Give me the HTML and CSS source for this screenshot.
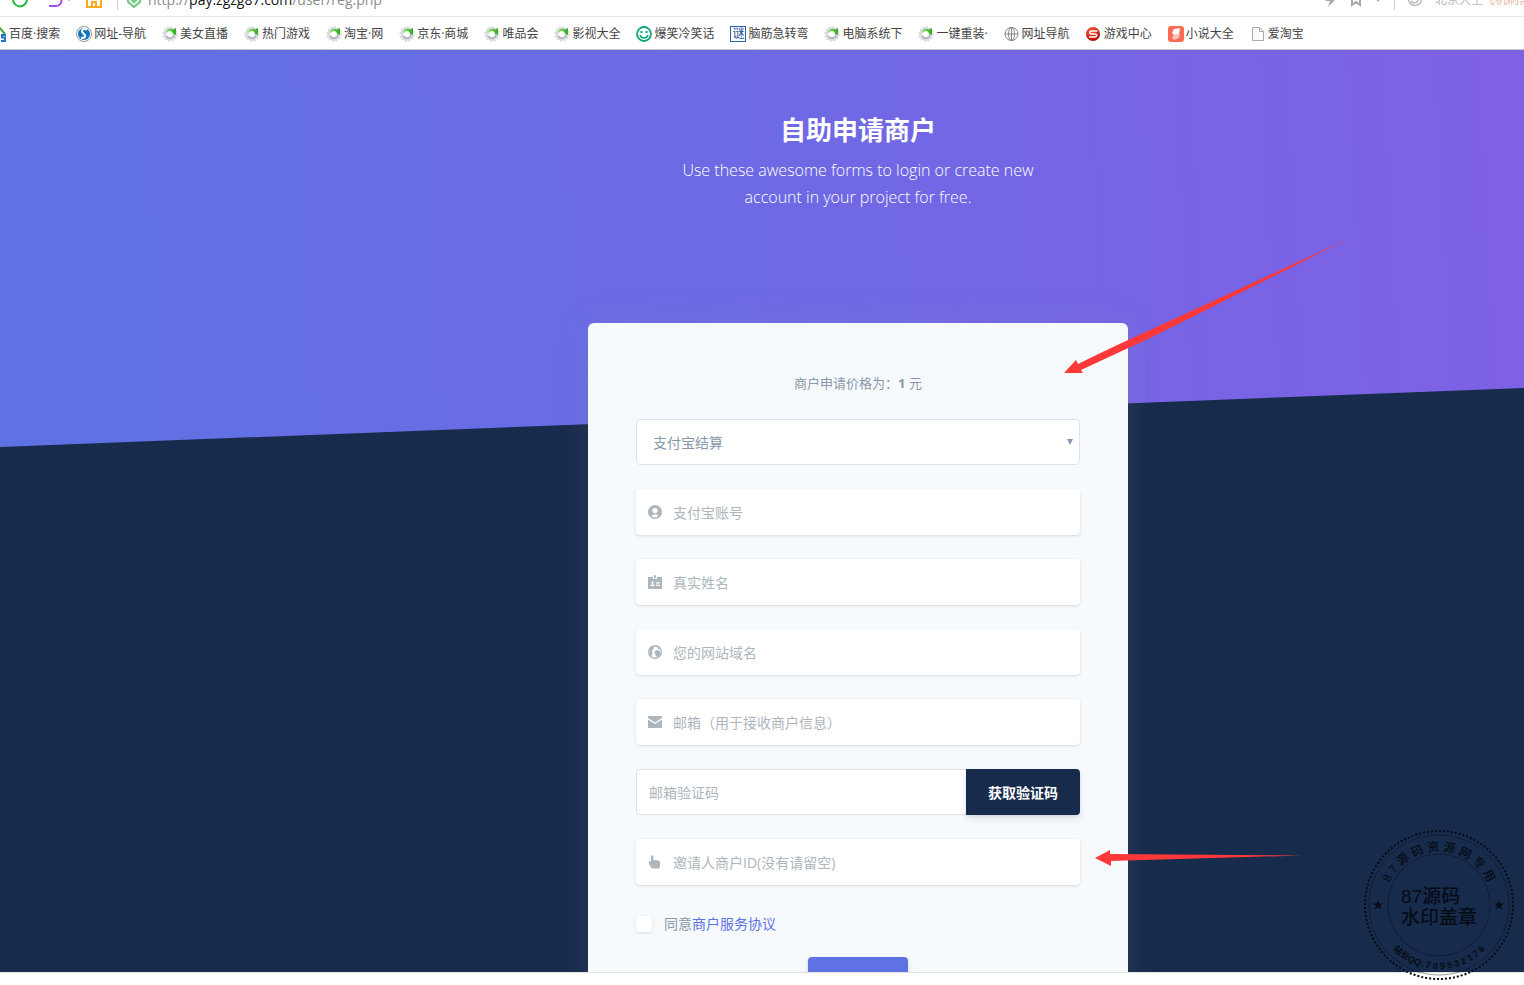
FILE: index.html
```html
<!doctype html>
<html lang="zh-CN">
<head>
  <meta charset="utf-8">
  <title>自助申请商户</title>
  <link rel="stylesheet" href="styles.css">
</head>
<body>
  <svg class="defs" aria-hidden="true">
    <defs>
      <linearGradient id="swirl-green" x1="0" y1="0" x2="1" y2="0">
        <stop offset="0" stop-color="#b9e8a4" />
        <stop offset=".5" stop-color="#5cc83c" />
        <stop offset="1" stop-color="#36a820" />
      </linearGradient>
      <radialGradient id="ball-red" cx=".4" cy=".3" r=".7">
        <stop offset="0" stop-color="#ff5a3c" />
        <stop offset="1" stop-color="#b00c04" />
      </radialGradient>
      <symbol id="gear" viewBox="0 0 16 16">
        <circle cx="8" cy="8" r="5.2" fill="none" stroke="#dcdce0" stroke-width="3" />
        <circle cx="8" cy="8" r="7" fill="none" stroke="#d6d6dc" stroke-width="1.4" stroke-dasharray="2 1.67" />
        <path d="M12.200 9a4.400 4.400 0 0 1-8 1" fill="none" stroke="#b4b4c0" stroke-width="1.600" />
        <path d="M3 7C4 3.200 7.600 1.600 11 3.400L14 2v6.500h-3C11 5 7.500 4 5.500 6.500z" fill="url(#swirl-green)" />
      </symbol>
    </defs>
  </svg>

  <header class="browser">
    <div class="toolbar">
      <svg class="tool reload" width="16" height="16" viewBox="0 0 16 16"><path d="M12.500 2A7 7 0 1 0 15 8" fill="none" stroke="#1fb63a" stroke-width="2" /></svg>
      <svg class="tool undo" width="22" height="16" viewBox="0 0 22 16"><path d="M3 3h5a5.500 5.500 0 0 1 0 11H1" fill="none" stroke="#a64bf4" stroke-width="2" /><circle cx="21" cy="8" r="1" fill="#c9a0f0" /></svg>
      <svg class="tool home" width="16" height="16" viewBox="0 0 16 16"><path d="M1 4v11h14V4M6 15v-5h4v5" fill="none" stroke="#fba81c" stroke-width="2" /></svg>
      <span class="divider"></span>
      <svg class="tool shield" width="16" height="16" viewBox="0 0 16 16"><path d="M2 2h12v8l-6 5-6-5z" fill="#e3f7e6" stroke="#6fcb80" stroke-width="2" /><path d="M5 7l3 3 4-4" fill="none" stroke="#6fcb80" stroke-width="2" /></svg>
      <span class="url">http://<b>pay.zgzg87.com</b>/user/reg.php</span>
      <div class="tools-right">
        <svg width="14" height="16" viewBox="0 0 14 16"><path d="M7 1L1 9h5l-2 6 9-9H8z" fill="#aaa" /></svg>
        <svg width="12" height="16" viewBox="0 0 12 16"><path d="M2 1h8v12L6 10l-4 3z" fill="none" stroke="#aaa" stroke-width="2" /></svg>
        <svg width="8" height="16" viewBox="0 0 8 16"><path d="M1 6h6l-3 4z" fill="#aaa" /></svg>
        <span class="divider"></span>
        <svg width="16" height="16" viewBox="0 0 16 16"><circle cx="8" cy="7" r="6.500" fill="none" stroke="#bbb" stroke-width="1.500" /><path d="M4 9c2 3 7 2 7-1s-5-3-6 0" fill="none" stroke="#bbb" stroke-width="1.500" /></svg>
        <span class="search">北京大空<i>飞机刷票</i></span>
      </div>
    </div>
    <nav class="bookmarks">
      <a href="#"><svg viewBox="0 0 16 16"><path d="M1 7l7-6 6 7" fill="none" stroke="#3fa535" stroke-width="2" /><path d="M4 7v8h5" fill="none" stroke="#3fa535" stroke-width="2" /><path d="M15 9h-4v2.500h3V15h-4" fill="none" stroke="#2272c8" stroke-width="2" /></svg>百度·搜索</a>
      <a href="#"><svg viewBox="0 0 16 16"><circle cx="8" cy="8" r="7.500" fill="#fff" stroke="#8f979e" /><circle cx="8" cy="8" r="6" fill="#1474bd" /><path d="M11 3.500C6 2 4.500 5 7.500 7.500s2 4.500-2.500 4.500" fill="none" stroke="#fff" stroke-width="2" /></svg>网址-导航</a>
      <a href="#"><svg><use href="#gear" /></svg>美女直播</a>
      <a href="#"><svg><use href="#gear" /></svg>热门游戏</a>
      <a href="#"><svg><use href="#gear" /></svg>淘宝·网</a>
      <a href="#"><svg><use href="#gear" /></svg>京东·商城</a>
      <a href="#"><svg><use href="#gear" /></svg>唯品会</a>
      <a href="#"><svg><use href="#gear" /></svg>影视大全</a>
      <a href="#"><svg viewBox="0 0 16 16"><circle cx="8" cy="8" r="7" fill="none" stroke="#12a57f" stroke-width="1.800" /><circle cx="5.500" cy="6" r="1.200" fill="#12a57f" /><circle cx="10.500" cy="6" r="1.200" fill="#12a57f" /><path d="M4 9c1 4 7 4 8 0" fill="none" stroke="#12a57f" stroke-width="1.500" /></svg>爆笑冷笑话</a>
      <a href="#"><span class="riddle">谜</span>脑筋急转弯</a>
      <a href="#"><svg><use href="#gear" /></svg>电脑系统下</a>
      <a href="#"><svg><use href="#gear" /></svg>一键重装·</a>
      <a href="#"><svg viewBox="0 0 16 16" fill="none" stroke="#858585"><circle cx="7.500" cy="8" r="6.500" /><ellipse cx="7.500" cy="8" rx="3" ry="6.500" /><path d="M1 8h13M7.500 1.500v13" /></svg>网址导航</a>
      <a href="#"><svg viewBox="0 0 16 16"><circle cx="7" cy="8" r="7" fill="url(#ball-red)" /><path d="M11.500 5H6C3 5 3 8 6 8h3c3 0 2 3-.5 3H3" fill="none" stroke="#fff" stroke-width="1.500" /></svg>游戏中心</a>
      <a href="#"><svg viewBox="0 0 16 16"><rect width="16" height="16" rx="3" fill="#ff6a55" /><path d="M6 3l6-1-1 6-5 1-2-2z" fill="#fff" /><path d="M6 9l6-1-1 4-5 2-2-2z" fill="#fff" opacity=".6" /></svg>小说大全</a>
      <a href="#"><svg viewBox="0 0 16 16"><path d="M2.500 1.500h7l4 4v9h-11zM9.500 1.500v4h4" fill="#fafafa" stroke="#a8a8a8" /></svg>爱淘宝</a>
    </nav>
  </header>

  <main>
    <section class="hero">
      <h1>自助申请商户</h1>
      <p>Use these awesome forms to login or create new account in your project for free.</p>
    </section>

    <section class="card">
      <form>
        <p class="price">商户申请价格为<span class="colon">：</span><b>1</b> 元</p>

        <div class="field select">
          <select aria-label="结算方式">
            <option>支付宝结算</option>
          </select>
          <svg class="caret" width="6" height="6" viewBox="0 0 6 6"><path d="M0 0h6L3 6z" fill="#8898aa" /></svg>
        </div>

        <label class="field">
          <svg viewBox="0 0 14 14"><path fill-rule="evenodd" d="M7 0a7 7 0 1 1 0 14A7 7 0 0 1 7 0zm0 3a2.600 2.600 0 1 0 0 5.200A2.600 2.600 0 0 0 7 3zM3.500 10.500C5 13 9 13 10.500 10.500 9 9 5 9 3.500 10.500z" /></svg>
          <input type="text" placeholder="支付宝账号">
        </label>

        <label class="field">
          <svg viewBox="0 0 14 14"><path fill-rule="evenodd" d="M0 2h5v2h4V2h5v12H0zM3.500 6.500v2.300h2V6.500zM2.500 11h4V9.600h-4zM8 7.200v1.300h4V7.200zM8 9.700V11h4V9.700z" /><rect x="6" width="2" height="3.500" rx="1" /></svg>
          <input type="text" placeholder="真实姓名">
        </label>

        <label class="field">
          <svg viewBox="0 0 14 14"><circle cx="7" cy="7" r="6.300" fill="none" stroke="#adb5bd" stroke-width="1.400" /><path d="M1 4l3-3 2 .5L5.500 4 4 5.500l.5 2L4 11 2 10zM7 6l2-1 2 .5L12.500 8 11 11l-2.500 1L7.500 10 6.500 8zM9 1l2 1 1.500 2H10z" /></svg>
          <input type="text" placeholder="您的网站域名">
        </label>

        <label class="field">
          <svg viewBox="0 0 14 14"><path d="M0 1h14v2L7 7.500 0 3zM0 4.500l7 4.500 7-4.500V13H0z" /></svg>
          <input type="text" placeholder="邮箱（用于接收商户信息）">
        </label>

        <div class="code">
          <input type="text" placeholder="邮箱验证码" aria-label="邮箱验证码">
          <button type="button">获取验证码</button>
        </div>

        <label class="field">
          <svg viewBox="0 0 14 14"><path d="M3 1.500a1.200 1.200 0 0 1 2.400 0V5l5 .6q1.600.3 1.600 2V11l-1 2.500H4L1.500 10 .8 6.500q1-1.200 2.200.5z" /></svg>
          <input type="text" placeholder="邀请人商户ID(没有请留空)">
        </label>

        <div class="agree">
          <input type="checkbox" id="agree">
          <label for="agree">同意<a href="#">商户服务协议</a></label>
        </div>

        <button class="submit" type="submit" aria-label="注册"></button>
      </form>

      <svg class="arrow arrow-top" width="290" height="140" viewBox="0 0 290 140"><path d="M4 133l12-13 2 4q30-15 72-34L288 -1 92 97 21 130l2 3z" /></svg>
      <svg class="arrow arrow-bottom" width="210" height="20" viewBox="0 0 210 20"><path d="M0 10L15 2v4L207 7.500 16 13v5z" /></svg>
    </section>
  </main>

  <footer class="status"></footer>

  <svg class="stamp" width="150" height="150" viewBox="-75 -75 150 150">
    <circle class="dots" r="74" />
    <circle class="ring" r="70" />
    <circle class="ring" r="51" />
    <path id="arc-top" d="M-54 0A54 54 0 0 1 54 0" fill="none" />
    <path id="arc-bottom" d="M-64 0A64 64 0 0 0 64 0" fill="none" />
    <text class="top"><textPath href="#arc-top" startOffset="50%">8 7 源 码 资 源 网 专 用</textPath></text>
    <text class="bottom"><textPath href="#arc-bottom" startOffset="50%">站长QQ: 7 0 9 5 3 2 1 7 6</textPath></text>
    <text class="middle" x="-38" y="-2">87源码</text>
    <text class="middle" x="-38" y="19">水印盖章</text>
    <path id="star" d="M-61-5l1.200 3.600h3.800l-3 2.200 1.200 3.700-3.200-2.200-3.200 2.200 1.200-3.700-3-2.200h3.800z" />
    <use href="#star" x="121" />
  </svg>
</body>
</html>
```

FILE: styles.css
```css
* {
  box-sizing: border-box;
}
html, body {
  margin: 0;
  padding: 0;
  height: 100%;
  overflow: hidden;
}
body {
  position: relative;
  display: flex;
  flex-flow: column nowrap;
  background: #fff;
  color: #8898aa;
  font-family: "Open Sans", "Noto Sans CJK SC", sans-serif;
  font-size: 14px;
  line-height: 24px;
}
a {
  color: #5e72e4;
  text-decoration: none;
}
input, select, button {
  font: inherit;
}
.defs {
  position: absolute;
  width: 0;
  height: 0;
}

/* browser chrome */
.browser {
  flex: none;
  border-bottom: 1px solid #c8c8c8;
  overflow: hidden;
}
.toolbar {
  display: flex;
  align-items: center;
  height: 33px;
  margin-top: -16px;
  padding-left: 12px;
  border-bottom: 1px solid #e6e6e6;
  white-space: nowrap;
}
.toolbar svg {
  flex: none;
}
.undo {
  margin-left: 20px;
}
.home {
  margin: 0 15px 0 16px;
}
.shield {
  margin: 0 6px 0 8px;
}
.divider {
  flex: none;
  width: 1px;
  height: 20px;
  background: #ccc;
}
.url {
  color: #8c8c8c;
  font-size: 14px;
}
.url b {
  color: #111;
  font-weight: 400;
}
.tools-right {
  display: flex;
  align-items: center;
  gap: 12px;
  width: 200px;
  margin-left: auto;
  overflow: hidden;
}
.search {
  color: #bbb;
  font-size: 12px;
}
.search i {
  color: #e8b99a;
  font-style: normal;
}
.bookmarks {
  display: flex;
  align-items: center;
  gap: 16px;
  height: 32px;
  margin-left: -9px;
  padding-top: 1px;
  white-space: nowrap;
}
.bookmarks a {
  display: flex;
  align-items: center;
  gap: 2px;
  color: #444;
  font-size: 12px;
}
.bookmarks svg, .riddle {
  flex: none;
  width: 16px;
  height: 16px;
}
.riddle {
  border: 1px solid #2a64b0;
  color: #12499a;
  line-height: 13px;
  text-align: center;
}

/* page */
main {
  flex: 1;
  min-height: 0;
  overflow: hidden;
  background: #172b4d;
}
.hero {
  height: 397px;
  padding: 64px 0 0 192px;
  background: linear-gradient(87deg, #5e72e4 0, #825ee4 112%);
  clip-path: polygon(0 0, 100% 0, 100% 338px, 0 100%);
  color: #fff;
  text-align: center;
}
.hero h1 {
  margin: 0 0 11px;
  font-size: 26px;
  font-weight: 700;
  line-height: 32px;
}
.hero p {
  max-width: 380px;
  margin: 0 auto;
  font-size: 16px;
  font-weight: 300;
  line-height: 27px;
}
.card {
  position: relative;
  width: 540px;
  margin: -124px auto 0;
  left: 96px;
  padding: 48px;
  border-radius: 6px;
  background: #f7fafc;
  box-shadow: 0 0 32px rgba(136, 152, 170, 0.15);
}
form {
  display: flex;
  flex-flow: column nowrap;
  gap: 24px;
}
.price {
  margin: 0;
  font-size: 13px;
  line-height: 24px;
  text-align: center;
}
.colon {
  font-family: "Noto Sans CJK TC", sans-serif;
  line-height: 1;
}
.field {
  display: flex;
  align-items: center;
  height: 46px;
  padding: 0 12px;
  gap: 9px;
  border-radius: 4px;
  background: #fff;
  box-shadow: 0 1px 3px rgba(50, 50, 93, 0.15), 0 1px 0 rgba(0, 0, 0, 0.02);
}
.field svg {
  flex: none;
  width: 14px;
  height: 14px;
  fill: #adb5bd;
}
.field input {
  flex: 1;
  min-width: 0;
  padding: 2px 0 0 2px;
  border: none;
  background: none;
  outline: none;
}
input::placeholder {
  color: #adb5bd;
}
.select {
  position: relative;
  padding: 0;
  box-shadow: none;
}
.select select {
  width: 100%;
  height: 46px;
  padding: 2px 16px 0;
  border: 1px solid #dee2e6;
  border-radius: 4px;
  background: #fff;
  color: #8898aa;
  appearance: none;
}
.select .caret {
  position: absolute;
  top: 20px;
  right: 7px;
  width: 6px;
  height: 6px;
}
.code {
  display: flex;
  height: 46px;
}
.code input {
  flex: 1;
  min-width: 0;
  padding: 2px 12px 0;
  border: 1px solid #dee2e6;
  border-right: none;
  border-radius: 4px 0 0 4px;
}
.code button {
  width: 114px;
  padding: 2px 0 0;
  border: none;
  border-radius: 0 4px 4px 0;
  background: #172b4d;
  color: #fff;
  font-weight: 700;
  box-shadow: 0 4px 6px rgba(50, 50, 93, 0.11), 0 1px 3px rgba(0, 0, 0, 0.08);
}
.agree {
  display: flex;
  align-items: center;
  gap: 12px;
  margin: 3px 0 -3px;
}
.agree input {
  width: 16px;
  height: 16px;
  margin: 0;
  border-radius: 4px;
  background: #fff;
  box-shadow: 0 1px 3px rgba(50, 50, 93, 0.15), 0 1px 0 rgba(0, 0, 0, 0.02);
  appearance: none;
}
.submit {
  align-self: center;
  width: 100px;
  height: 46px;
  border: none;
  border-radius: 4px;
  background: #5e72e4;
  box-shadow: 0 4px 6px rgba(50, 50, 93, 0.11), 0 1px 3px rgba(0, 0, 0, 0.08);
}
.status {
  flex: none;
  height: 13px;
  border-top: 1px solid #e2e2e2;
}

/* red pointers over the card */
.arrow {
  position: absolute;
  fill: #fd3838;
}
.arrow-top {
  top: -83px;
  left: 472px;
}
.arrow-bottom {
  top: 525px;
  left: 507px;
}

/* watermark */
.stamp {
  position: absolute;
  right: 10px;
  bottom: 5px;
  overflow: visible;
  fill: #060b14;
  font-family: "Liberation Sans", "Noto Sans CJK SC", sans-serif;
  font-weight: 500;
}
.stamp .dots {
  fill: none;
  stroke: #060b14;
  stroke-width: 2;
  stroke-dasharray: 2 2;
}
.stamp .ring {
  fill: none;
  stroke: #060b14;
  stroke-opacity: 0.4;
}
.stamp .top {
  font-size: 12px;
  text-anchor: middle;
}
.stamp .bottom {
  font-size: 9px;
  font-weight: 700;
  text-anchor: middle;
}
.stamp .middle {
  font-size: 19px;
}
```
